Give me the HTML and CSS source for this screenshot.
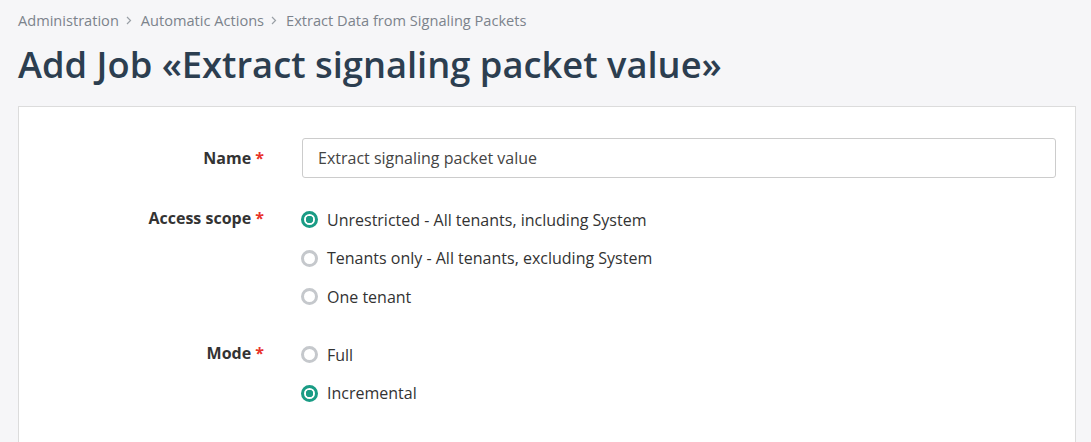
FILE: index.html
```html
<!DOCTYPE html>
<html lang="en">
<head>
<meta charset="utf-8">
<title>Add Job</title>
<link rel="stylesheet" href="styles.css">
</head>
<body>
<div class="page">
  <nav class="crumbs">
    <span>Administration</span><svg class="sep" width="6" height="9" viewBox="0 0 6 9"><path d="M1 1l3.5 3.5L1 8" fill="none" stroke="#9aa0a6" stroke-width="1.2"/></svg>
    <span>Automatic Actions</span><svg class="sep" width="6" height="9" viewBox="0 0 6 9"><path d="M1 1l3.5 3.5L1 8" fill="none" stroke="#9aa0a6" stroke-width="1.2"/></svg>
    <span>Extract Data from Signaling Packets</span>
  </nav>
  <h1 class="title">Add Job «Extract signaling packet value»</h1>
  <div class="card">
    <div class="row row-name">
      <div class="label">Name <span class="req">*</span></div>
      <div class="field"><input class="input" type="text" value="Extract signaling packet value"></div>
    </div>
    <div class="row">
      <div class="label lab-radio">Access scope <span class="req">*</span></div>
      <div class="field radios">
        <div class="radio"><span class="dot on"></span>Unrestricted - All tenants, including System</div>
        <div class="radio"><span class="dot"></span>Tenants only - All tenants, excluding System</div>
        <div class="radio"><span class="dot"></span>One tenant</div>
      </div>
    </div>
    <div class="row">
      <div class="label lab-radio">Mode <span class="req">*</span></div>
      <div class="field radios">
        <div class="radio"><span class="dot"></span>Full</div>
        <div class="radio"><span class="dot on"></span>Incremental</div>
      </div>
    </div>
  </div>
</div>
</body>
</html>
```
FILE: styles.css
```css
html, body { margin: 0; padding: 0; }
body {
  background: #f6f6f8;
  font-family: "Open Sans", "Liberation Sans", sans-serif;
  color: #333;
  overflow: hidden;
  height: 442px;
}
.page { padding: 10px 15px 0 18px; }
.crumbs {
  font-size: 14.6px;
  line-height: 20px;
  color: #7c838c;
  display: flex;
  align-items: center;
}
.crumbs .sep { margin: 0 9px 0 7px; flex: none; }
.title {
  margin: 8px 0 0 0;
  font-size: 36.3px;
  line-height: 52px;
  font-weight: 600;
  color: #2c3e50;
}
.card {
  margin-top: 16px;
  background: #fff;
  border: 1px solid #dcdcdc;
  padding: 31px 19px 40px 0;
  display: flex;
  flex-direction: column;
  gap: 19.5px;
  height: 360px;
}
.row { display: flex; align-items: flex-start; }
.row-name { margin-bottom: 3px; }
.label {
  width: 245px;
  flex: none;
  text-align: right;
  font-weight: 700;
  font-size: 16px;
  line-height: 40px;
  color: #333;
}
.lab-radio { line-height: 34px; }
.req { color: #e8342b; font-weight: 700; }
.field { flex: 1; margin-left: 38px; }
.input {
  box-sizing: border-box;
  width: 100%;
  height: 40px;
  border: 1px solid #ccc;
  border-radius: 3px;
  padding: 0 15px;
  font-family: "Open Sans", "Liberation Sans", sans-serif;
  font-size: 16px;
  color: #444;
  background: #fff;
  outline: none;
}
.radios { display: flex; flex-direction: column; }
.radio {
  display: flex;
  align-items: center;
  height: 38.5px;
  font-size: 16px;
  color: #333;
}
.dot {
  box-sizing: border-box;
  width: 17px;
  height: 17px;
  border-radius: 50%;
  border: 3px solid #c5c8cc;
  margin: 0 9px 0 -1px;
  flex: none;
  background: #fff;
}
.dot.on {
  border-color: #1a9c85;
  background: radial-gradient(circle, #1a9c85 0 3.5px, #fff 4px);
}
```
